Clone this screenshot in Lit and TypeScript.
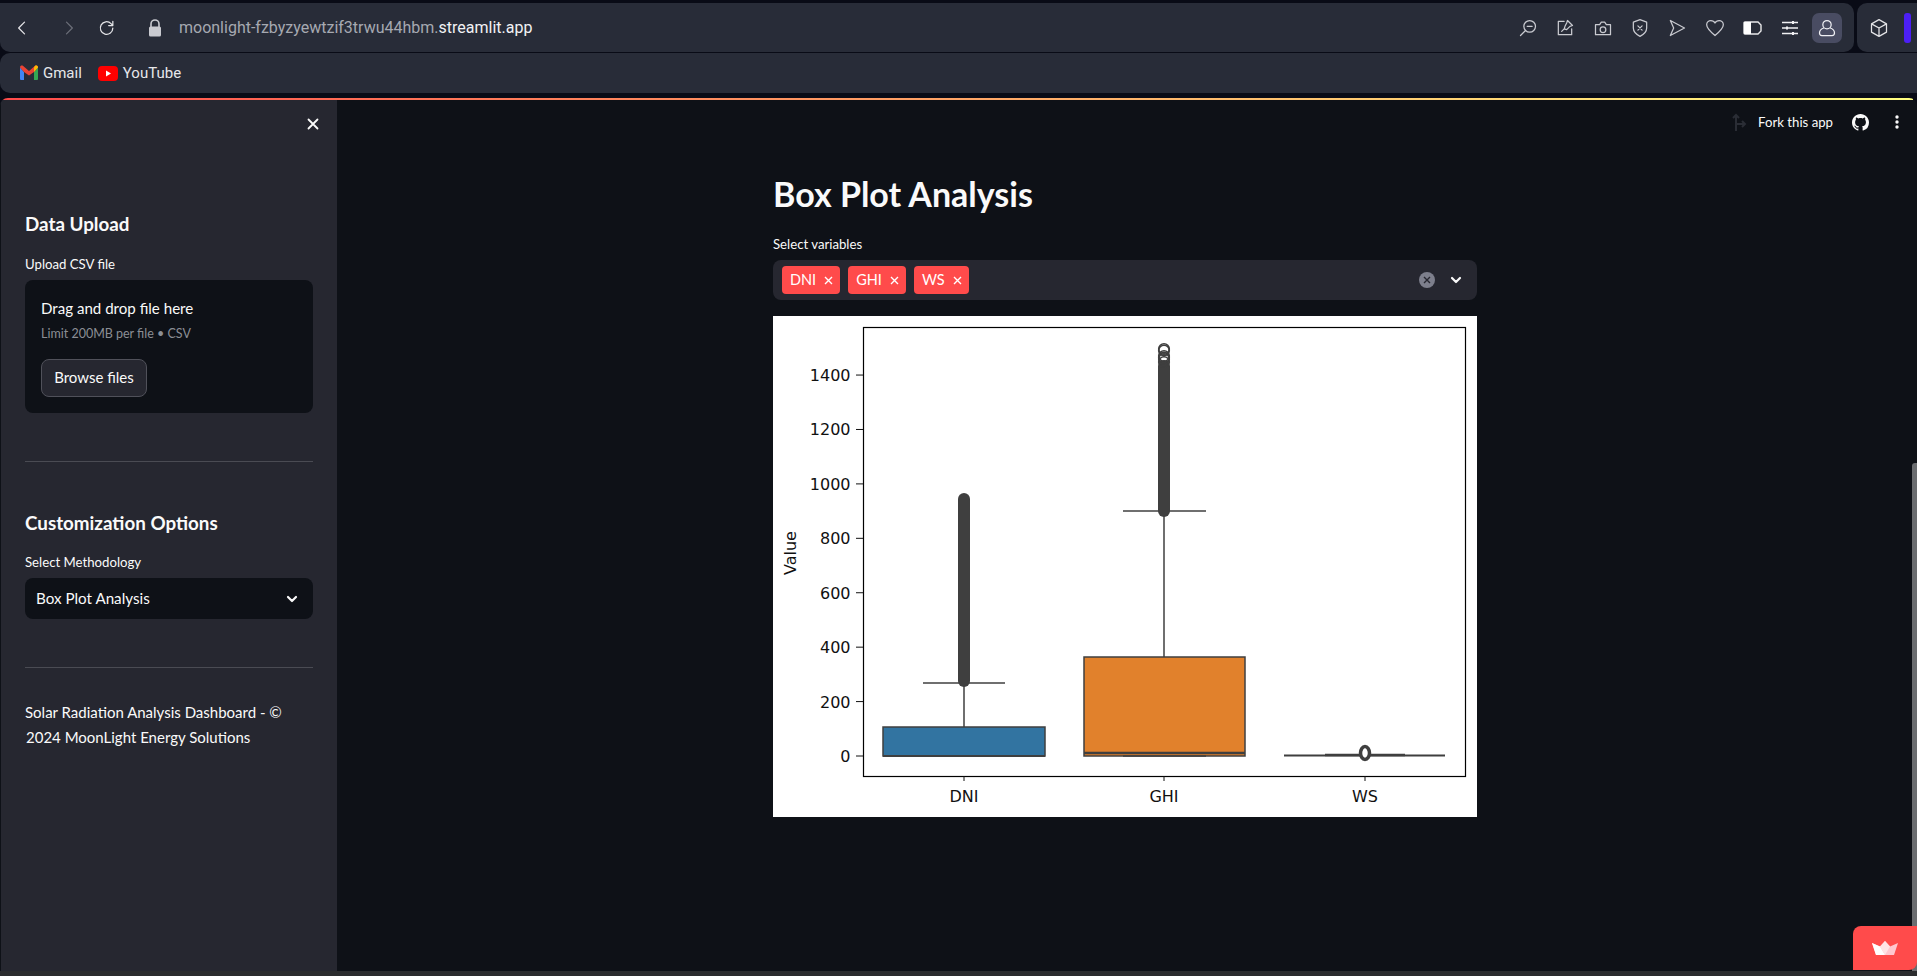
import { LitElement, css, html, svg } from 'lit'
import { customElement } from 'lit/decorators.js'

const icon = (size: number, body: unknown, view = '0 0 24 24') => html`
  <svg width=${size} height=${size} viewBox=${view} fill="none" stroke="currentColor" stroke-width="1.5" stroke-linecap="round" stroke-linejoin="round">${body}</svg>
`

const chevron = html`<svg width="14" height="14" viewBox="0 0 14 14" fill="none" stroke="#fafafa" stroke-width="2.2" stroke-linecap="round" stroke-linejoin="round"><path d="M3 5l4 4 4-4" /></svg>`

const toolIcons = [
  svg`<circle cx="14" cy="10" r="7" /><path d="M11 10h6M9 15l-6 6" />`,
  svg`<path d="M11 4H4v16h16v-7" /><path d="M15 3l6 6-3 1-4 4-3-1 1-3 2-4zM11 13l-3 3" />`,
  svg`<path d="M3 8h5l2-3h4l2 3h5v12H3z" /><circle cx="12" cy="14" r="3.4" />`,
  svg`<path d="M12 2l8 3v7c0 5-4 8-8 10-4-2-8-5-8-10V5z" /><path d="M9.5 9.5l5 5M14.5 9.5l-5 5" />`,
  svg`<path d="M4 3l17 9-17 9 4-9z" />`,
  svg`<path d="M12 21C5 15 2 12 2 8c0-3 2.500-5 5-5 2 0 4 1 5 3 1-2 3-3 5-3 2.500 0 5 2 5 5 0 4-3 7-10 13z" />`,
]

@customElement('app-root')
export class AppRoot extends LitElement {
  static styles = css`
    :host {
      display: block;
      width: 1917px;
      height: 976px;
      overflow: hidden;
      position: relative;
      background: #090b16;
      font-family: 'Lato', 'Noto Sans', sans-serif;
      color: #fafafa;
    }
    .chrome-top {
      display: flex;
      gap: 3px;
      padding-top: 3px;
      height: 52px;
      box-sizing: border-box;
    }
    .toolbar,
    .extensions {
      background: #282c38;
      height: 49px;
      display: flex;
      align-items: center;
      box-sizing: border-box;
    }
    .toolbar {
      width: 1854px;
      border-radius: 0 10px 10px 10px;
      color: #c9cad0;
    }
    .extensions {
      width: 60px;
      border-radius: 10px 0 0 10px;
      color: #e4e4e7;
      padding-left: 12px;
      gap: 15px;
    }
    .nav {
      display: flex;
      align-items: center;
      width: 179px;
      flex: none;
    }
    .nav-btn {
      width: 20px;
      display: flex;
      justify-content: center;
    }
    .back { margin-left: 12px; color: #e4e4e7; }
    .forward { margin-left: 27px; color: #6b6e78; }
    .reload { margin-left: 18px; color: #e4e4e7; }
    .lock { margin-left: 28px; color: #c9cad0; }
    .url {
      font-family: 'Roboto', sans-serif;
      font-size: 16px;
      color: #a6a9b1;
      flex: 1;
    }
    .url b {
      font-weight: 400;
      color: #f2f2f4;
    }
    .tools {
      display: flex;
      align-items: center;
      margin-right: 12px;
      gap: 7.4px;
    }
    .tool {
      width: 30px;
      height: 30px;
      display: flex;
      align-items: center;
      justify-content: center;
      border-radius: 7px;
    }
    .tool.on {
      background: #494c62;
      color: #f0f0f4;
    }
    .accent {
      width: 7px;
      height: 30px;
      border-radius: 3px;
      background: #4c1ff5;
    }
    .bookmarks {
      margin-top: 1px;
      height: 40px;
      background: #282c38;
      border-radius: 10px 0 0 10px;
      display: flex;
      align-items: center;
      padding-left: 20px;
      font-family: 'Roboto', sans-serif;
      font-size: 15px;
      color: #e6e7ea;
      box-sizing: border-box;
    }
    .bookmark {
      display: flex;
      align-items: center;
      gap: 5px;
      margin-right: 16px;
    }
    .page {
      margin-top: 5px;
      height: 873px;
      background: #0e1117;
      position: relative;
      border-radius: 8px 8px 0 0;
      overflow: hidden;
    }
    .decoration {
      height: 2px;
      width: 1913px;
      background: linear-gradient(90deg, #ff4b4b, #fffd80);
    }
    .columns {
      display: flex;
      height: 871px;
    }
    aside {
      width: 337px;
      flex: none;
      background: #262730;
      box-sizing: border-box;
      padding-left: 25px;
      border-left: 1px solid #0e1117;
    }
    aside > * { margin-left: -1px; width: 288px; }
    aside > .close { width: 295px; }
    .close {
      height: 48px;
      display: flex;
      align-items: center;
      justify-content: flex-end;
      color: #fafafa;
    }
    h2 {
      margin: 0;
      font-size: 18.8px;
      line-height: 30px;
      font-weight: 700;
      text-indent: -1px;
    }
    .section-one { margin-top: 61px; }
    .section-two { margin-top: 46px; }
    label {
      display: block;
      font-size: 13.2px;
      line-height: 20px;
    }
    .upload-label { margin-top: 15px; }
    .dropzone {
      margin-top: 6px;
      height: 133px;
      background: #0e1117;
      border-radius: 8px;
      padding: 16px 16px 0;
      box-sizing: border-box;
    }
    .drop-title {
      font-size: 15.1px;
      line-height: 24px;
    }
    .drop-limit {
      margin-top: 4px;
      font-size: 12.5px;
      line-height: 20px;
      color: #8b8e95;
    }
    .browse {
      margin-top: 15px;
      width: 106px;
      height: 38px;
      box-sizing: border-box;
      display: flex;
      align-items: center;
      justify-content: center;
      padding-bottom: 2px;
      border: 1px solid #50515a;
      border-radius: 8px;
      background: #262730;
      font-size: 15px;
    }
    .rule {
      height: 1px;
      background: #4a4b53;
      margin-top: 48px;
    }
    .method-label { margin-top: 14px; }
    .select {
      margin-top: 6px;
      height: 41px;
      background: #0e1117;
      border-radius: 8px;
      display: flex;
      align-items: center;
      justify-content: space-between;
      padding: 0 14px 0 11px;
      box-sizing: border-box;
      font-size: 15.2px;
    }
    .select span { margin-top: -2px; }
    .footer {
      margin: 32px 0 0;
      font-size: 15px;
      line-height: 25px;
      text-indent: -1px;
    }
    main {
      flex: 1;
      padding-left: 436px;
      box-sizing: border-box;
      position: relative;
    }
    .content {
      width: 704px;
      padding-top: 68px;
    }
    h1 {
      margin: 0;
      font-size: 34px;
      line-height: 52px;
      font-weight: 700;
    }
    .vars-label { margin-top: 14px; }
    .multi {
      margin-top: 6px;
      height: 40px;
      background: #262730;
      border-radius: 8px;
      display: flex;
      align-items: center;
      gap: 8px;
      padding: 0 14px 0 9px;
      box-sizing: border-box;
    }
    .chip {
      height: 28px;
      padding: 0 7px 2px 8px;
      box-sizing: border-box;
      display: flex;
      align-items: center;
      gap: 8px;
      border-radius: 4px;
      background: #ff4b4b;
      color: #fff;
      font-size: 14.500px;
    }
    .chip svg { margin-top: 2px; }
    .clear {
      margin-left: auto;
      margin-right: 6px;
      width: 16px;
      height: 16px;
    }
    .plot {
      margin-top: 16px;
      display: block;
      width: 704px;
      height: 501px;
      background: #fff;
    }
    .plot text {
      font-family: 'DejaVu Sans', sans-serif;
      font-size: 16px;
      fill: #111;
    }
    .app-bar {
      position: absolute;
      top: 10px;
      right: 18px;
      display: flex;
      align-items: center;
      font-size: 13.2px;
      line-height: 24px;
      height: 24px;
    }
    .fork-icon {
      margin-right: 10px;
      color: #2a2d35;
      display: flex;
    }
    .github {
      margin-left: 19px;
      display: flex;
    }
    .dots {
      margin-left: 26px;
      display: flex;
    }
    .scrollbar {
      position: absolute;
      right: 0;
      top: 365px;
      bottom: 0;
      width: 5px;
      background: #6b6d70;
      border-radius: 3px 0 0 0;
    }
    .manage {
      position: absolute;
      right: 0;
      top: 828px;
      width: 64px;
      height: 44px;
      background: #ff4b4b;
      border-radius: 8px 0 8px 0;
      display: flex;
      align-items: center;
      justify-content: center;
    }
    .edge {
      height: 5px;
      background: #2b2c2e;
    }
  `

  private renderPlot() {
    // y axis runs 0.2721px per unit with 0 at y=440 inside the image
    const ticks = [0, 200, 400, 600, 800, 1000, 1200, 1400]
    const y = (v: number) => 440 - v * 0.2721
    const line = '#3f3f3f'
    return html`
      <svg class="plot" viewBox="0 0 704 501">
        <rect x="90.500" y="11.500" width="602" height="449" fill="none" stroke="#000" stroke-width="1.200" />
        ${ticks.map(
          (t) => svg`
            <line x1="83" x2="90" y1=${y(t)} y2=${y(t)} stroke="#111" />
            <text x="77.500" y=${y(t) + 6} text-anchor="end">${t}</text>
          `
        )}
        <text transform="translate(23 237) rotate(-90)" text-anchor="middle">Value</text>

        <!-- DNI -->
        <line x1="191" x2="191" y1="367" y2="411" stroke=${line} stroke-width="1.5" />
        <line x1="150" x2="232" y1="367" y2="367" stroke=${line} stroke-width="1.5" />
        <line x1="191" x2="191" y1="183" y2="365" stroke=${line} stroke-width="12" stroke-linecap="round" />
        <rect x="110" y="411" width="162" height="29" fill="#3274a1" stroke=${line} stroke-width="1.5" />
        <line x1="110" x2="272" y1="440" y2="440" stroke=${line} stroke-width="2" />

        <!-- GHI -->
        <line x1="391" x2="391" y1="195" y2="341" stroke=${line} stroke-width="1.5" />
        <line x1="350" x2="433" y1="195" y2="195" stroke=${line} stroke-width="1.5" />
        <line x1="391" x2="391" y1="50" y2="195" stroke=${line} stroke-width="12" stroke-linecap="round" />
        ${[33, 34.5, 40, 41.5, 43, 46].map(
          (cy) => svg`<circle cx="391" cy=${cy} r="5.300" fill="none" stroke=${line} stroke-width="1.600" />`
        )}
        <rect x="311" y="341" width="161" height="99" fill="#e1812c" stroke=${line} stroke-width="1.5" />
        <line x1="311" x2="472" y1="437" y2="437" stroke=${line} stroke-width="2.500" />
        <line x1="350" x2="433" y1="440" y2="440" stroke=${line} stroke-width="1.5" />

        <!-- WS -->
        <line x1="511" x2="672" y1="439.500" y2="439.500" stroke=${line} stroke-width="2" />
        <line x1="552" x2="632" y1="439" y2="439" stroke=${line} stroke-width="2.500" />
        <ellipse cx="592" cy="437" rx="4.500" ry="6.500" fill="#fff" stroke=${line} stroke-width="3.500" />

        ${[
          ['DNI', 191],
          ['GHI', 391],
          ['WS', 592],
        ].map(
          ([name, x]) => svg`
            <line x1=${x} x2=${x} y1="460" y2="465" stroke="#111" />
            <text x=${x} y="485.500" text-anchor="middle">${name}</text>
          `
        )}
      </svg>
    `
  }

  render() {
    return html`
      <div class="chrome-top">
        <div class="toolbar">
          <div class="nav">
            <span class="nav-btn back">${icon(20, svg`<path d="M15 5l-7 7 7 7" />`)}</span>
            <span class="nav-btn forward">${icon(20, svg`<path d="M9 5l7 7-7 7" />`)}</span>
            <span class="nav-btn reload">${icon(20, svg`<path d="M19 12a7.500 7.500 0 1 1-2.200-5.300L19 9M19 4v5h-5" />`)}</span>
            <span class="nav-btn lock">
              <svg width="16" height="20" viewBox="0 0 16 20"><path d="M4 9V6a4 4 0 0 1 8 0v3" fill="none" stroke="currentColor" stroke-width="1.600" /><rect x="2" y="8.500" width="12" height="10" rx="1.500" fill="currentColor" /></svg>
            </span>
          </div>
          <div class="url">moonlight-fzbyzyewtzif3trwu44hbm.<b>streamlit.app</b></div>
          <div class="tools">
            ${toolIcons.map((body) => html`<span class="tool">${icon(20, body)}</span>`)}
            <span class="tool">
              <svg width="19" height="14" viewBox="0 0 19 14"><path d="M2 1h13l3 3v6l-3 3H2a1 1 0 0 1-1-1V2a1 1 0 0 1 1-1z" fill="none" stroke="#e8e8ea" stroke-width="1.400" /><rect x="1" y="1" width="7" height="12" fill="#fff" /></svg>
            </span>
            <span class="tool">
              <svg width="18" height="16" viewBox="0 0 18 16" fill="none" stroke="#f0f0f2" stroke-width="1.300"><path d="M1 2.500h16M1 8h16M1 13.500h16" /><path d="M12 1v3M6 6.500v3M12 12v3" stroke-width="2" /></svg>
            </span>
            <span class="tool on">${icon(20, svg`<circle cx="12" cy="8" r="5" /><path d="M8 12c-3 1-5 3-5 6 0 2 1 3 3 3h12c2 0 3-1 3-3 0-3-2-5-5-6" />`)}</span>
          </div>
        </div>
        <div class="extensions">
          ${icon(20, svg`<path d="M12 2l9 5v10l-9 5-9-5V7zM3 7l9 5 9-5M12 12v10" />`)}
          <span class="accent"></span>
        </div>
      </div>
      <div class="bookmarks">
        <span class="bookmark">
          <svg width="18" height="16" viewBox="0 0 18 16">
            <path d="M0 2.500V14a1 1 0 0 0 1 1h3V7z" fill="#4285f4" />
            <path d="M18 2.500V14a1 1 0 0 1-1 1h-3V7z" fill="#34a853" />
            <path d="M0 2.500C0 .5 2 0 3.200 1L9 6l5.800-5C16 0 18 .5 18 2.500L14 7 9 10.500 4 7z" fill="#ea4335" />
            <path d="M14 2.800l.800-1.800C16 0 18 .5 18 2.500L14 7z" fill="#fbbc04" />
          </svg>
          Gmail
        </span>
        <span class="bookmark">
          <svg width="20" height="15" viewBox="0 0 20 15"><rect width="20" height="15" rx="4" fill="#f00" /><path d="M8 4.500l5 3-5 3z" fill="#fff" /></svg>
          YouTube
        </span>
      </div>
      <div class="page">
        <div class="decoration"></div>
        <div class="columns">
          <aside>
            <div class="close">
              <svg width="14" height="14" viewBox="0 0 14 14" stroke="#fafafa" stroke-width="1.800" stroke-linecap="round"><path d="M2.500 2.500l9 9M11.500 2.500l-9 9" /></svg>
            </div>
            <h2 class="section-one">Data Upload</h2>
            <label class="upload-label">Upload CSV file</label>
            <div class="dropzone">
              <div class="drop-title">Drag and drop file here</div>
              <div class="drop-limit">Limit 200MB per file • CSV</div>
              <div class="browse">Browse files</div>
            </div>
            <div class="rule"></div>
            <h2 class="section-two">Customization Options</h2>
            <label class="method-label">Select Methodology</label>
            <div class="select"><span>Box Plot Analysis</span>${chevron}</div>
            <div class="rule"></div>
            <p class="footer">Solar Radiation Analysis Dashboard - ©<br />2024 MoonLight Energy Solutions</p>
          </aside>
          <main>
            <div class="content">
              <h1>Box Plot Analysis</h1>
              <label class="vars-label">Select variables</label>
              <div class="multi">
                ${['DNI', 'GHI', 'WS'].map(
                  (v) => html`<span class="chip">${v}
                    <svg width="9" height="9" viewBox="0 0 9 9" stroke="#fff" stroke-width="1.400"><path d="M1 1l7 7M8 1L1 8" /></svg>
                  </span>`
                )}
                <svg class="clear" viewBox="0 0 16 16"><circle cx="8" cy="8" r="8" fill="#7d7f8c" /><path d="M5 5l6 6M11 5l-6 6" stroke="#262730" stroke-width="1.400" /></svg>
                ${chevron}
              </div>
              ${this.renderPlot()}
            </div>
            <div class="app-bar">
              <span class="fork-icon">
                <svg width="16" height="20" viewBox="0 0 16 20" fill="none" stroke="currentColor" stroke-width="2"><path d="M4 19V3M1 6l3-3 3 3M4 12h9M10 9l3 3-3 3" /></svg>
              </span>
              Fork this app
              <span class="github">
                <svg width="17" height="17" viewBox="0 0 16 16" fill="#fafafa"><path d="M8 0C3.580 0 0 3.580 0 8c0 3.540 2.290 6.530 5.470 7.590.4.070.55-.17.55-.38 0-.19-.01-.82-.01-1.490-2.010.37-2.530-.49-2.690-.94-.09-.23-.48-.94-.82-1.130-.28-.15-.68-.52-.01-.53.63-.01 1.080.58 1.230.82.720 1.210 1.870.87 2.330.66.070-.52.280-.87.510-1.070-1.780-.2-3.640-.89-3.640-3.950 0-.87.310-1.590.820-2.150-.08-.2-.360-1.020.080-2.120 0 0 .670-.210 2.200.820.640-.180 1.320-.270 2-.270s1.360.090 2 .270c1.530-1.040 2.200-.820 2.200-.820.440 1.100.160 1.920.080 2.120.510.560.820 1.270.820 2.150 0 3.070-1.870 3.750-3.650 3.950.290.250.540.730.540 1.480 0 1.070-.010 1.930-.010 2.200 0 .210.150.460.550.380A8.010 8.010 0 0 0 16 8c0-4.420-3.580-8-8-8z" /></svg>
              </span>
              <span class="dots">
                <svg width="4" height="16" viewBox="0 0 4 16" fill="#fafafa"><circle cx="2" cy="3" r="1.700" /><circle cx="2" cy="8" r="1.700" /><circle cx="2" cy="13" r="1.700" /></svg>
              </span>
            </div>
          </main>
        </div>
        <div class="scrollbar"></div>
        <div class="manage">
          <svg width="26" height="14" viewBox="0 0 26 14">
            <path d="M0 2l8 3.500L13 0l5 5.500L26 2l-4 12H4z" fill="#ffc7cf" />
            <path d="M0 2l8 3.500 5 8.500H4z" fill="#fff" />
            <path d="M13 0l5 5.500-5 8.500-5-8.500z" fill="#ffe3e6" />
          </svg>
        </div>
      </div>
      <div class="edge"></div>
    `
  }
}
